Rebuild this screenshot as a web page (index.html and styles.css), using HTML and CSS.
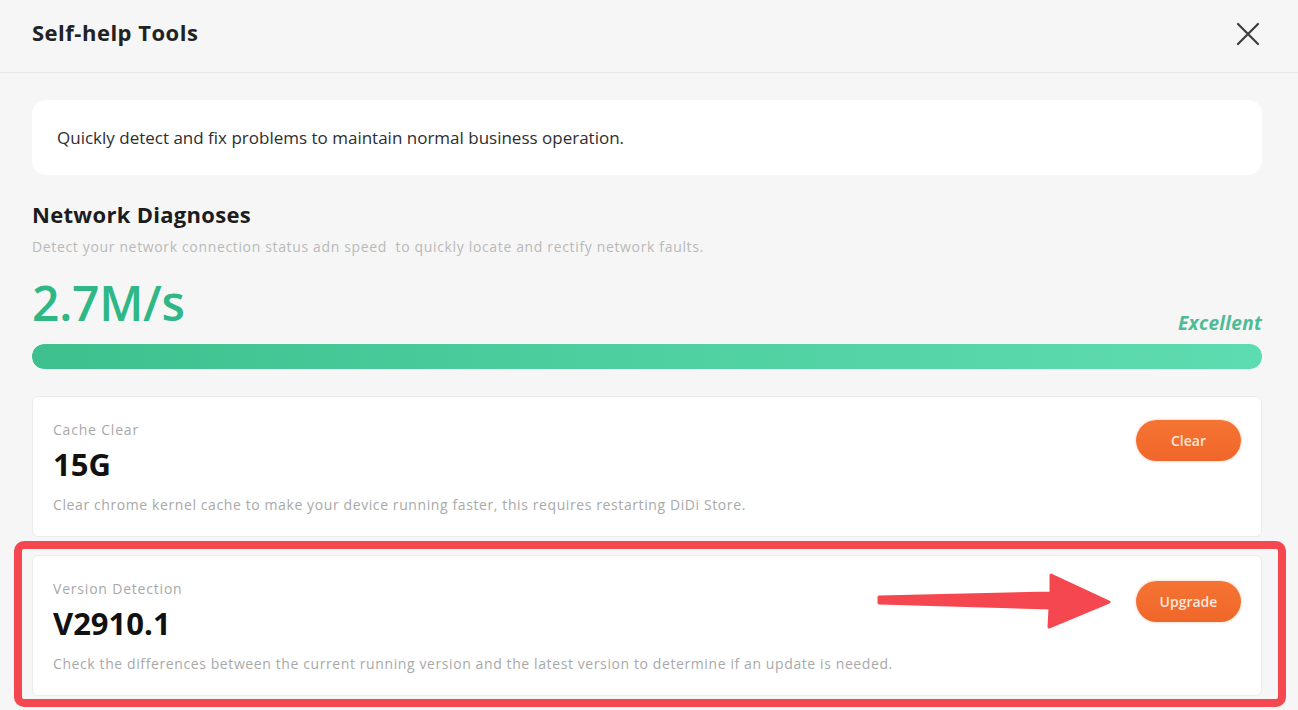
FILE: index.html
```html
<!DOCTYPE html>
<html lang="en">
<head>
<meta charset="utf-8">
<title>Self-help Tools</title>
<link rel="stylesheet" href="styles.css">
</head>
<body>
<div class="page">
  <header class="header">
    <h1 class="header-title">Self-help Tools</h1>
    <button class="close" aria-label="Close">
      <svg width="24" height="24" viewBox="0 0 24 24"><path d="M2 2 L22 22 M22 2 L2 22" stroke="#3d3d3d" stroke-width="2.2" stroke-linecap="round" fill="none"/></svg>
    </button>
  </header>

  <main class="content">
    <div class="intro">Quickly detect and fix problems to maintain normal business operation.</div>

    <section class="network">
      <h2 class="section-title">Network Diagnoses</h2>
      <p class="section-sub">Detect your network connection status adn speed &nbsp;to quickly locate and rectify network faults.</p>
      <div class="speed-row">
        <div class="speed">2.7M/s</div>
        <div class="rating">Excellent</div>
      </div>
      <div class="bar"><div class="bar-fill" style="width:100%"></div></div>
    </section>

    <section class="tool-card">
      <div class="tool-info">
        <div class="tool-label">Cache Clear</div>
        <div class="tool-value">15G</div>
        <div class="tool-desc">Clear chrome kernel cache to make your device running faster, this requires restarting DiDi Store.</div>
      </div>
      <button class="pill">Clear</button>
    </section>

    <section class="tool-card version">
      <div class="tool-info">
        <div class="tool-label">Version Detection</div>
        <div class="tool-value">V2910.1</div>
        <div class="tool-desc">Check the differences between the current running version and the latest version to determine if an update is needed.</div>
      </div>
      <button class="pill">Upgrade</button>
      <div class="highlight"></div>
      <svg class="arrow" width="240" height="62" viewBox="0 0 240 62"><path d="M6,27 L178,23 L178,5 L236,32 L176,57 L177,38 L6,33 Z" fill="#f5474f" stroke="#f5474f" stroke-width="3" stroke-linejoin="round"/></svg>
    </section>
  </main>
</div>
</body>
</html>
```

FILE: styles.css
```css
* { box-sizing: border-box; }
html, body { margin: 0; padding: 0; }
body {
  background: #f6f6f6;
  font-family: "Open Sans", "Liberation Sans", sans-serif;
  color: #1c1c1c;
  width: 1298px;
  height: 710px;
  overflow: hidden;
}
.page { display: flex; flex-direction: column; }

.header {
  height: 73px;
  display: flex;
  align-items: center;
  justify-content: space-between;
  padding: 0 38px 0 32px;
  border-bottom: 1px solid #e6e6e6;
}
.header-title {
  margin: 0 0 9px 0;
  font-size: 22px;
  font-weight: 700;
  color: #222;
  letter-spacing: 0.5px;
}
.close {
  border: 0; background: none; padding: 0; margin-bottom: 4px;
  width: 24px; height: 24px; display: flex;
}

.content {
  display: flex;
  flex-direction: column;
  padding: 0 36px 0 32px;
}
.intro {
  margin-top: 27px;
  height: 75px;
  background: #fff;
  border-radius: 14px;
  display: flex;
  align-items: center;
  padding: 0 25px;
  font-size: 17px;
  color: #2e2e2e;
}

.network { display: flex; flex-direction: column; }
.section-title {
  margin: 25px 0 0 0;
  font-size: 22px;
  line-height: 28px;
  font-weight: 700;
  color: #1c1c1c;
  letter-spacing: 0.3px;
}
.section-sub {
  margin: 10px 0 0 0;
  font-size: 14px;
  line-height: 18px;
  color: #b9b9b9;
  letter-spacing: 0.65px;
}
.speed-row {
  display: flex;
  justify-content: space-between;
  align-items: flex-end;
  margin-top: 18px;
}
.speed {
  font-size: 48px;
  line-height: 58px;
  font-weight: 600;
  color: #2fb886;
  letter-spacing: -0.3px;
}
.rating {
  font-size: 19px;
  font-weight: 700;
  font-style: italic;
  color: #4fbb95;
  margin-bottom: -4px;
  letter-spacing: 0.3px;
}
.bar {
  margin-top: 12px;
  height: 25px;
  border-radius: 12px;
  background: #e6f5ef;
  overflow: hidden;
}
.bar-fill {
  height: 100%;
  border-radius: 12px;
  background: linear-gradient(90deg, #3dbf8e 0%, #4fd0a0 50%, #5edcb1 100%);
}

.tool-card {
  position: relative;
  background: #fff;
  border-radius: 6px;
  border: 1px solid #ececec;
  display: flex;
  justify-content: space-between;
  align-items: flex-start;
  padding: 23px 20px 0 20px;
  height: 141px;
  margin-top: 27px;
}
.tool-card.version { margin-top: 18px; }
.tool-label {
  font-size: 14px;
  line-height: 20px;
  color: #a8a8a8;
  letter-spacing: 0.8px;
}
.tool-value {
  margin-top: 5px;
  font-size: 31px;
  line-height: 38px;
  font-weight: 700;
  color: #111;
  letter-spacing: 0;
}
.tool-desc {
  margin-top: 13px;
  font-size: 14px;
  line-height: 18px;
  color: #a9a9a9;
  letter-spacing: 0.6px;
}
.pill {
  width: 105px;
  height: 41px;
  border: 0;
  border-radius: 21px;
  background: linear-gradient(180deg, #f57433 0%, #f0662a 100%);
  color: #fde6dc;
  font-family: inherit;
  font-size: 14px;
  font-weight: 600;
  box-shadow: 0 0 3px rgba(240, 110, 50, 0.4);
}
.version .pill { margin-top: 2px; }
.highlight {
  position: absolute;
  top: -15px;
  left: -19px;
  right: -25px;
  bottom: -12px;
  border: 8px solid #f5474f;
  border-radius: 10px;
  pointer-events: none;
}
.arrow {
  position: absolute;
  left: 840px;
  top: 14px;
}
```
